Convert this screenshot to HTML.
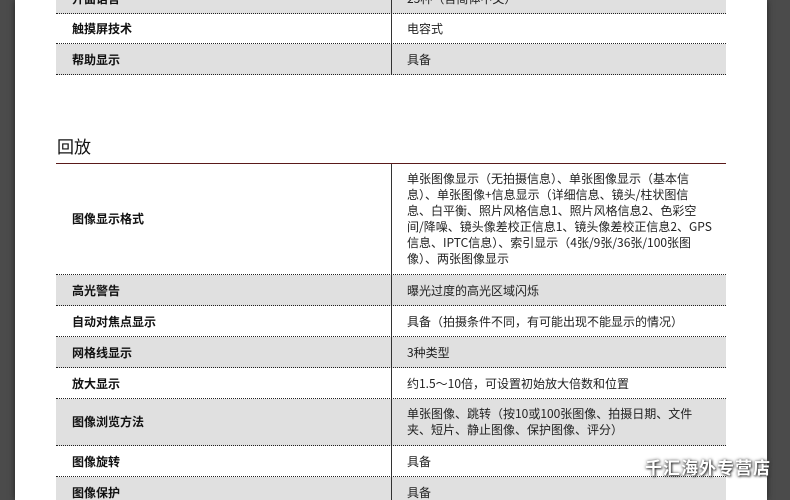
<!DOCTYPE html>
<html><head><meta charset="utf-8"><style>
html,body{margin:0;width:790px;height:500px;overflow:hidden;}
body{background:#4b4b4b;position:relative;font-family:"Liberation Sans","Noto Sans CJK SC",sans-serif;}
#page{position:absolute;left:15px;top:0;width:752px;height:500px;background:#fff;box-shadow:0 0 6px #222;}
.r{position:absolute;left:56px;width:670px;border-bottom:1px dotted #222;font-size:12px;color:#222;}
.g{background:#e0e0e0}
.k{position:absolute;left:16px;font-weight:bold;color:#111;line-height:16px;font-family:"Noto Sans CJK SC",sans-serif;}
.v{position:absolute;left:351px;line-height:16px;white-space:nowrap;font-family:"Noto Sans CJK SC",sans-serif;}
.d{position:absolute;left:335px;top:0;bottom:0;border-left:1px solid #333}
.h{position:absolute;left:57px;top:135px;font-size:17px;color:#111;font-family:"Noto Sans CJK SC",sans-serif;line-height:22px}
.wm{position:absolute;left:645px;top:456px;font-size:17px;font-weight:bold;color:#fff;letter-spacing:1px;text-shadow:1px 1px 2px #333,0 0 3px #555;font-family:"Noto Sans CJK SC",sans-serif;line-height:22px}
</style></head><body>
<div id="page"></div>
<div class="r g" style="top:-18px;height:31px"><div class="d"></div><span class="k" style="top:9px">开面语言</span><span class="v" style="top:9px">25种（含简体中文）</span></div>
<div class="r" style="top:13px;height:30px"><div class="d"></div><span class="k" style="top:8px">触摸屏技术</span><span class="v" style="top:8px">电容式</span></div>
<div class="r g" style="top:44px;height:30px"><div class="d"></div><span class="k" style="top:8px">帮助显示</span><span class="v" style="top:8px">具备</span></div>
<div class="h">回放</div>
<div class="r" style="top:163px;height:110px;border-top:1px solid #5a1a1a"><div class="d"></div><span class="k" style="top:47px">图像显示格式</span><span class="v" style="top:7px">单张图像显示（无拍摄信息）、单张图像显示（基本信<br>息）、单张图像+信息显示（详细信息、镜头/柱状图信<br>息、白平衡、照片风格信息1、照片风格信息2、色彩空<br>间/降噪、镜头像差校正信息1、镜头像差校正信息2、GPS<br>信息、IPTC信息）、索引显示（4张/9张/36张/100张图<br>像）、两张图像显示</span></div>
<div class="r g" style="top:275px;height:30px"><div class="d"></div><span class="k" style="top:8px">高光警告</span><span class="v" style="top:8px">曝光过度的高光区域闪烁</span></div>
<div class="r" style="top:306px;height:30px"><div class="d"></div><span class="k" style="top:8px">自动对焦点显示</span><span class="v" style="top:8px">具备（拍摄条件不同，有可能出现不能显示的情况）</span></div>
<div class="r g" style="top:337px;height:30px"><div class="d"></div><span class="k" style="top:8px">网格线显示</span><span class="v" style="top:8px">3种类型</span></div>
<div class="r" style="top:368px;height:30px"><div class="d"></div><span class="k" style="top:8px">放大显示</span><span class="v" style="top:8px">约1.5～10倍，可设置初始放大倍数和位置</span></div>
<div class="r g" style="top:399px;height:46px"><div class="d"></div><span class="k" style="top:15px">图像浏览方法</span><span class="v" style="top:7px">单张图像、跳转（按10或100张图像、拍摄日期、文件<br>夹、短片、静止图像、保护图像、评分）</span></div>
<div class="r" style="top:446px;height:30px"><div class="d"></div><span class="k" style="top:8px">图像旋转</span><span class="v" style="top:8px">具备</span></div>
<div class="r g" style="top:477px;height:23px;border-bottom:none"><div class="d"></div><span class="k" style="top:8px">图像保护</span><span class="v" style="top:8px">具备</span></div>
<div class="wm">千汇海外专营店</div>
</body></html>
